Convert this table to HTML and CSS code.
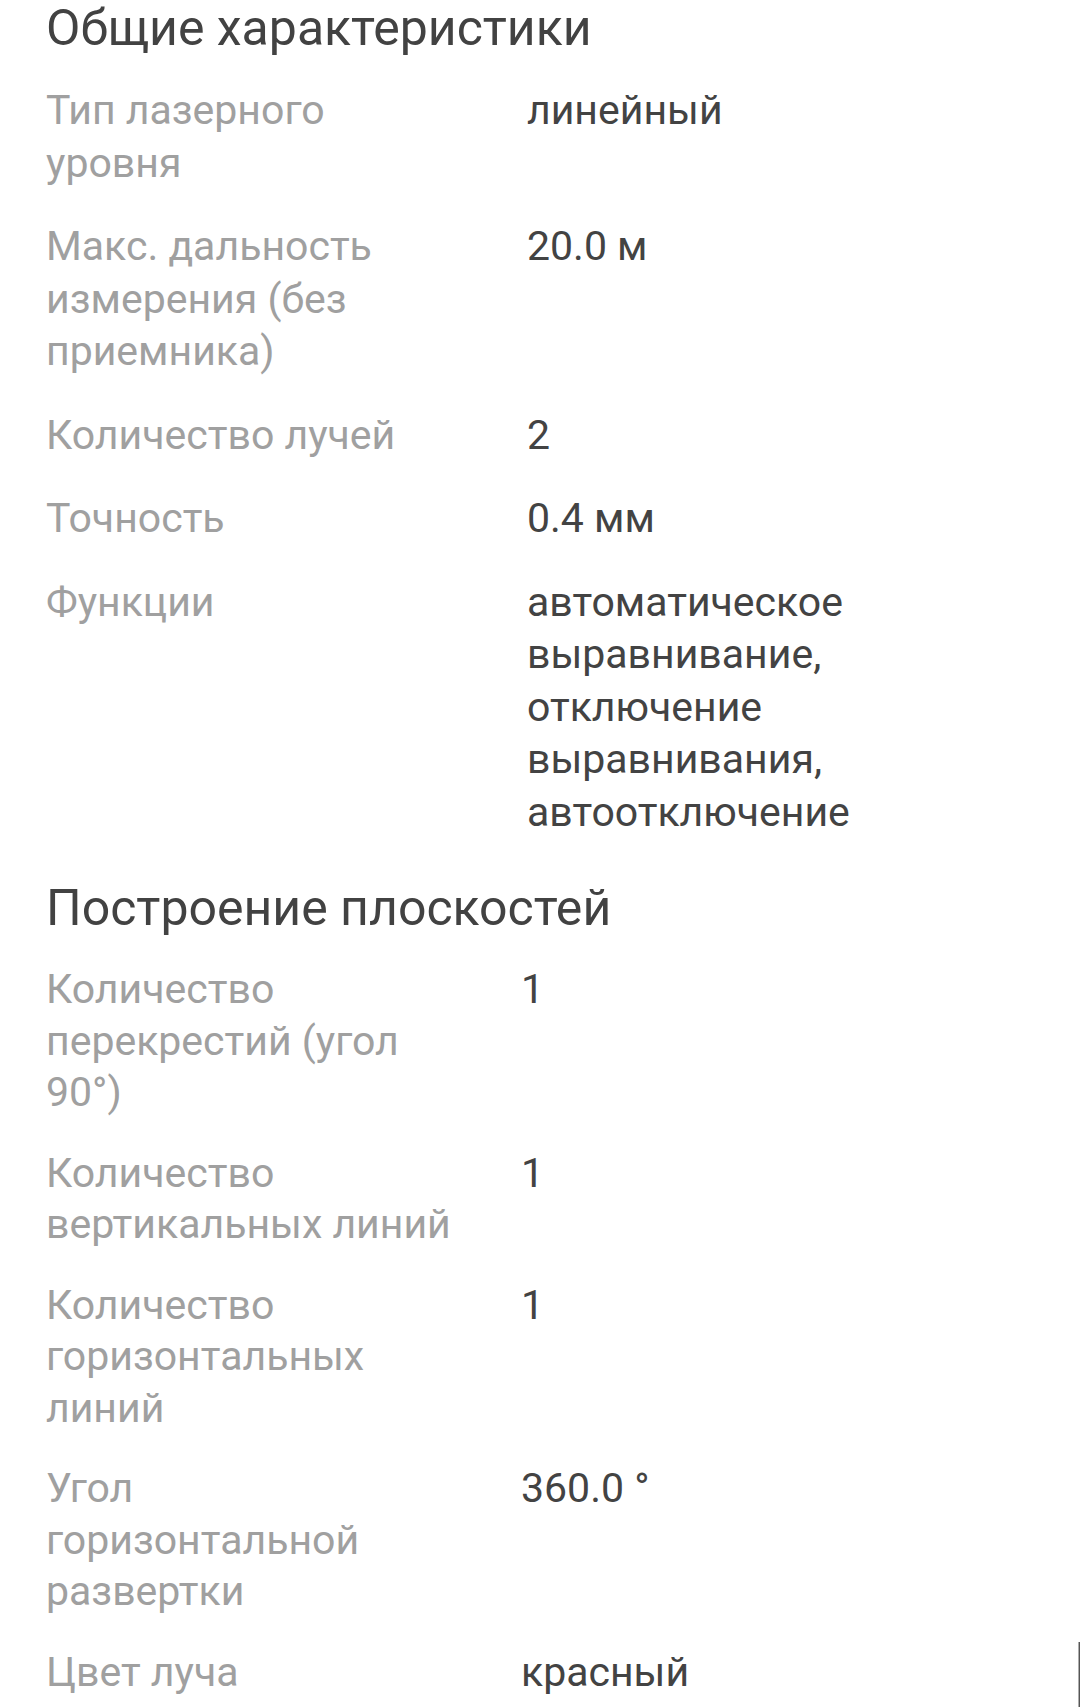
FILE: index.html
```html
<!DOCTYPE html>
<html lang="ru">
<head>
<meta charset="utf-8">
<title>Характеристики</title>
<link rel="stylesheet" href="styles.css">
</head>
<body>
<main class="page">
  <section class="spec-section">
    <h2 class="spec-title">Общие характеристики</h2>
    <dl class="spec-list">
      <div class="spec-row"><dt class="spec-label">Тип лазерного уровня</dt><dd class="spec-value">линейный</dd></div>
      <div class="spec-row"><dt class="spec-label">Макс. дальность измерения (без приемника)</dt><dd class="spec-value">20.0 м</dd></div>
      <div class="spec-row"><dt class="spec-label">Количество лучей</dt><dd class="spec-value">2</dd></div>
      <div class="spec-row"><dt class="spec-label">Точность</dt><dd class="spec-value">0.4 мм</dd></div>
      <div class="spec-row"><dt class="spec-label">Функции</dt><dd class="spec-value">автоматическое выравнивание, отключение выравнивания, автоотключение</dd></div>
    </dl>
  </section>
  <section class="spec-section spec-section--second">
    <h2 class="spec-title">Построение плоскостей</h2>
    <dl class="spec-list">
      <div class="spec-row"><dt class="spec-label">Количество перекрестий (угол 90°)</dt><dd class="spec-value">1</dd></div>
      <div class="spec-row"><dt class="spec-label">Количество вертикальных линий</dt><dd class="spec-value">1</dd></div>
      <div class="spec-row"><dt class="spec-label">Количество горизонтальных линий</dt><dd class="spec-value">1</dd></div>
      <div class="spec-row"><dt class="spec-label">Угол горизонтальной развертки</dt><dd class="spec-value">360.0 °</dd></div>
      <div class="spec-row"><dt class="spec-label">Цвет луча</dt><dd class="spec-value">красный</dd></div>
    </dl>
  </section>
  <div class="edge-line"></div>
</main>
</body>
</html>
```

FILE: styles.css
```css
html, body {
  margin: 0;
  padding: 0;
  background: #ffffff;
}

body {
  font-family: Roboto, "Noto Sans", "Liberation Sans", sans-serif;
  overflow: hidden;
}

.page {
  position: relative;
  width: 1080px;
  height: 1707px;
  box-sizing: border-box;
  padding: 0 46px;
}

.spec-section + .spec-section {
  margin-top: 42px;
}

.spec-title {
  margin: 0;
  font-size: 50px;
  line-height: 56px;
  font-weight: 400;
  color: #424242;
}

.spec-list {
  margin: 28px 0 0;
  display: flex;
  flex-direction: column;
  gap: 31px;
}

.spec-row {
  display: grid;
  grid-template-columns: 407px 1fr;
  column-gap: 74px;
  font-size: 41px;
  line-height: 52.5px;
}

.spec-label {
  margin: 0;
  color: #a0a0a0;
}

.spec-value {
  margin: 0;
  color: #434343;
  max-width: 500px;
}

.spec-section--second .spec-list {
  gap: 29px;
}

.spec-section--second .spec-row {
  line-height: 51.5px;
  column-gap: 68px;
}

.edge-line {
  position: absolute;
  right: 0;
  top: 1642px;
  width: 2px;
  height: 65px;
  background: linear-gradient(to right, #d8d8d8, #2a2a2a);
}
```
